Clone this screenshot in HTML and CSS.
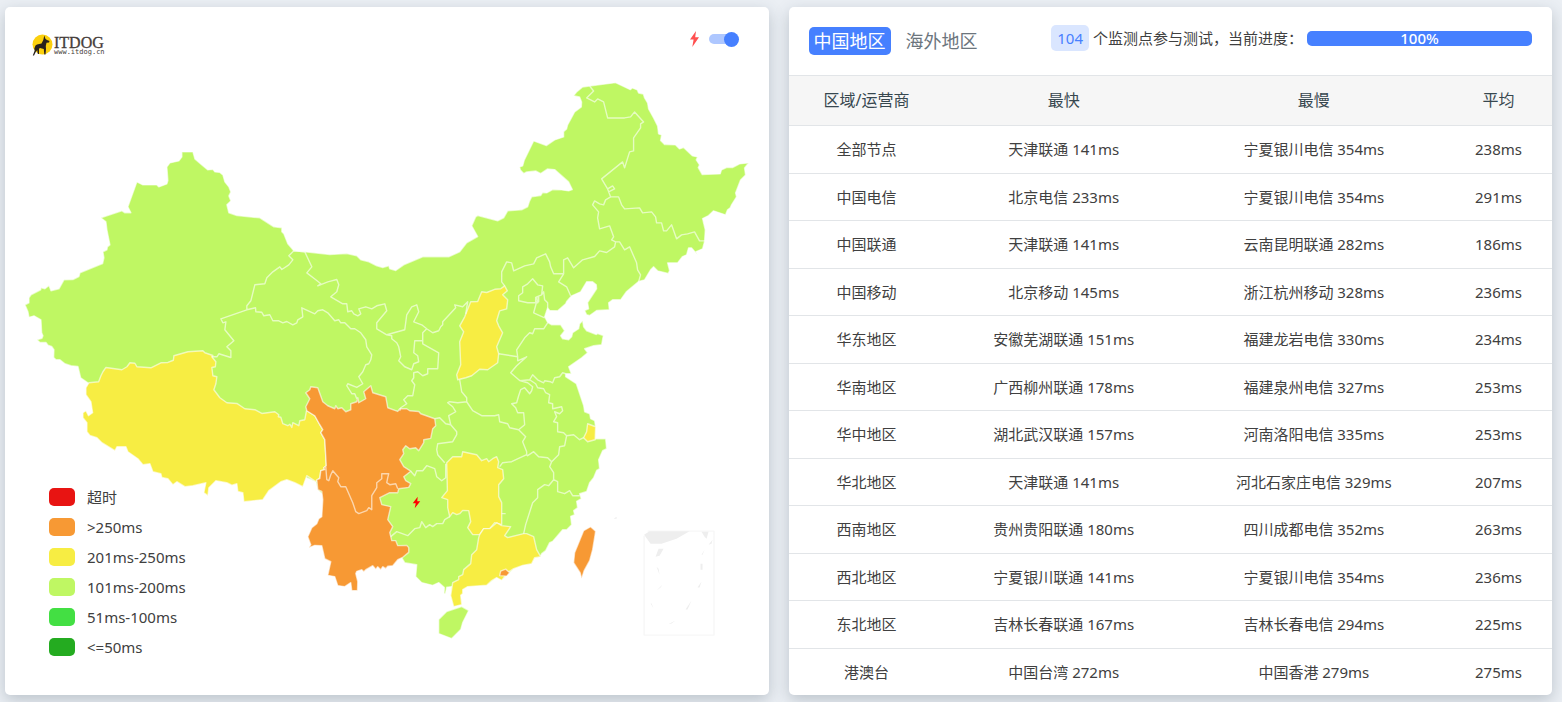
FILE: index.html
```
<!DOCTYPE html>
<html lang="zh-CN">
<head>
<meta charset="utf-8">
<title>ITDOG</title>
<meta name="viewport" content="width=device-width, initial-scale=1">
<link rel="stylesheet" href="styles.css">
</head>
<body>
<main class="page">
  <section class="card map-card">
    <svg class="map" viewBox="5 7 764 688" role="img" aria-label="中国地图">
      <!-- mainland -->
      <path class="lv-200" d="M182 152L193 152L195 159L202 165L208 170L213 169.500L215 172L220 172.500L223 175L225 182L229 187L231 192L229 196L231 201L227 205L229 213L237 215.700L260 218L274 227L282 228L282 232L284 234L288 244L294 251L305 252L330 254.700L347 253.700L357 256L361 260L369 262L377 266L383 267.700L389 266L390 269L396 270.700L404 265L423 257L449 257L460 252L467 243L478 236.700L472 226L476 217L478 215.700L498 221L504 218L508 211L522 210L528 207L530 201L532 197L541 195.700L543 192.700L547 193L553 189.700L562 190L569 191L572.700 189.700L569 182L555 169.700L548 169L541 173.700L536 171L527 172L524 173.700L520.700 170L520 167L523 166L524.700 160L534 141L546.700 145.700L555 140L564 137L564 131.700L567 129L568 125L575 112L581.700 107L582 102L580 97L574 95.700L577 92L583 87L590 86L616 82.700L630.700 89.700L632.700 88L637.700 90L639 93L643.700 94L645 98L648 103L649 109L654 118L658 126L659 134L662 135L661 140.700L665 144.700L676 145L680 149L684 147.700L693 156L698 157L696.700 160L700 165L698.700 167.700L702.700 174.700L720.700 174L722 170L727 167.700L733 167.700L740 164L749 163L745 168L746 175L741 180L736 193L737 197L732 205L730.700 208L728 210L726 215L714 211L709 215.700L703 218.700L705.700 230L705 241.700L703 249L696 252L698 255L692 248L689 248L687 255L683 256.700L678 263L668 263L670 270.700L668.700 273.700L658 271L654 267L651 270L645 280L639 281.700L627 291.700L621 300L613 300L609 303L609.700 310L597 310.700L590 315.700L587 315L585 310.700L589 309L588 302.700L597 289L596.700 285L593 282L587 282L581 292L572 296L567 301.700L566 304L558 311L550 310.700L548 308L545 317L548 322.700L552 325L561 325L565 331L561 336L563 339L569 340L572 337L573 333L579 329L580 324L583 321L584 327L587 331L596.700 334.700L598 333.700L603.700 335.700L602 345L594 346L585 349L588 353L582 358L569 367L571.700 374L566 374L566 377L576.700 384L584 405.700L585 412L590 414L591 419L595 421L596 427L595.500 439L606 439L607 449L603 451L599 460L600 469L597 470.700L594 478L590 483L587 491.700L580 494L581.700 499L577 501.700L578 508L574 511L575 515L571 516.700L572 525L567 530L563 530L557 537L553 541.700L550 543L546 551L542 554L540.700 557L535 558L532 564L523 565.700L514 569L502 580.700L497 578L487 585.700L468 587L463 590L463 594L461 595.700L462 605L454 607L451 596L452 587L447 587.700L445.700 594L444.300 594L444.700 588L439 583L433 585.700L422 583L416 577L417 565L405 563L402 558L370 540L318 490L316 482L90 384L89 383.700L80.700 378L78 366.700L71 366L65 364L60 360L56 360L53.700 357.700L54 350L51.700 346.700L48 345.500L46 342.700L40 342.700L37 340L42 338.500L43 336L41.700 333L41 320L34 316L29 317.500L28 312L25 305L29 303L29 298L31 295L40.700 290L41 288L45 289L49 285.700L51 291L59 289L64 280L73 279.700L79 276.700L80 273L102.700 263.700L104 258L103 252L107 250L107.500 247L110 245L107 230L106 222L101 218L122 211L125 213L131 213L128 207L137 182L143 185L157 185L159 187L167 184L168 180.700L167 167L170 163L179 161L182 157Z"/>
      <!-- Hainan -->
      <path class="lv-200" d="M447 612L462 607L469 611L463 623L461 630L456 635L452 639L439 634L439 620Z"/>
      <!-- Tibet -->
      <path class="lv-250" d="M89 383L98.700 382L101 376L103 372L106 367.700L122 370L127 367L130 363L135 363.500L137 367L151 368L161 363L168 362.700L173.500 360.500L174 356L188 352L203 351L205 353L213 355.700L212 357L216 362L215.500 367L212 367.700L213 376L217 377L216 384L214 390L220 398L227 403L237 403.700L245 409L255 410L262 413.700L275 412L279 415L278.500 417L281 417.500L283 424L288 426L290 424.500L292 427.700L293 423L299 426L300 421L305 420L306.700 411L315 416L320 425L323 430L321 433L325 440L326.500 466L324 468L325 470L321 471L320 478L316 482L307 476L303 487L295 483L287 480L281 482L269 491L263 500L244 502L243 493L238 491.700L237 484L232 485.500L227 483L216 481L209 488L208 496L204 493L206 483L193 486L185 487L177 482L173 485L168 479L162 477.700L161 474L153 472L150 464L143 465L138 459L128 452L126 447L117 447L115 451L102 443L97 438L90 435.700L87 432L87 423L83 418L83 413L86 411L88.500 416L92.700 413L91 402L86 395L86 388Z"/>
      <!-- Sichuan and Yunnan -->
      <path class="lv-over" d="M307 411L306 407L310 399L306 393L310 390L311 387L318 388L323 402L328 406L335 409L336 406L338 409L342 408L346 412L351 410L351 404L357 402L358 398L359 403L366 399L364 392L371 386L373 393L386 397L388 408L398 411.700L400 409L407 409L410 411L419 411.700L421 414L435 419L436 426L433 429L431 438.700L424 440L424 443L419 451L416 448L410 449L406 446L403 450L404 454L400 460L404 467L411 471.500L404 477L406 481L411 484L409 487.700L399 489L398 493L390 493L380 498L382 505L391 507L388 520L393 527L390 533L392 541L396 541L398 546L407 545.700L409 548L409 552.700L403 557.700L398 560L393 566L388 566.500L386 569L383 567L381 570L378 567L376 569.500L373 566L366 570L364 572L362 570L357 571.700L356 574L358 582L357.700 591L352 591L351 583L345 587L338 586L335 577L328 575.700L331 562L325 559L322 546L315 545.700L309 548L311 545L308 537L312 528L317 524L319 519L322 517L323 500L322 491.700L318 490L317 480L320 479L321 471L325 470L324 468L326.500 466L325 440L321 433L323 430L320 425L315 416Z"/>
      <!-- Shanxi -->
      <path class="lv-250" d="M505 286L507.700 291L503 295L508 300L507 309L500 311L497 321L499 326L503 333L497 347L499 354L498 363L488 370L480 369.500L472 376L466 378L458 380L457 375L461 365L460 342L464 332L460 326L465 317L471 302L478 301.700L482 292L487 292.700L495 289.500L501 289Z"/>
      <!-- Hunan -->
      <path class="lv-250" d="M447 463L453 457L462 457L463 452L477 455L482 461L487 459L489 462L493 459L497 457L499 462L498 468L503 470L504 479L499 485L499 497L502 503L502 525L495 523L490 529L484 529L480 535L473 535L468 528L471 522L469 511L463 510.700L460 514L457 515L453 513L450 517L448 508L448 500L442 498L447.700 491Z"/>
      <!-- Guangdong -->
      <path class="lv-250" d="M480 535L484 529L490 529L497 523L502 526L511 527L505 536L508 538L524 534L527 534L534 537L537 550L541 557L535 558L532 564L523 565.700L514 569L508 573L502 580.700L497 578L492 581L487 585.700L468 587L463 590L463 594L461 595.700L462 605L454 607L451 596L453 583L459 580L459 577L463 575L464 570L471 564L472 555L477 550L479 538Z"/>
      <!-- Shanghai, Hong Kong, Taiwan -->
      <path class="lv-250" d="M588 424L596 427L595.500 440L588 442L584 438L587 432Z"/>
      <path class="lv-over" d="M500 576L501 571.500L506 569.500L510 573L507 576.500ZM584 531L591 527L596 531.500L595 538L593 550L590 561L584.500 571L582 579L580.500 573L574 563L575 553Z"/>
      <!-- province borders -->
      <path class="border" d="M294 251L289 256L293 260L289 265L282 269.700L280 267L273 272L267 278L265 284L255 285L251 301L247 306L247 310L221 319L223 323L226 322L225 330L234 341L227 347L231 351L231 357.700L219 354L217 357L212 357
      M247 310L255.700 308L256 312L262 312.500L264 316L270 315L273 321L279 321L283 323L287 321.700L293 325L297 323L298 320L303 317L302 308L315 314L318 311L323 310L328 313L335 321L339 320L341 323L345 323L351 329L355 329L361 333L366 340L367 347L372 355L371 360L369 364L366 365L363 372L359 377L363 384L357 387.700L348 384L347 386L352 394L355 394L357 399
      M294 251L305 252L312 267L307 273L316 280L321 284L318 286L328 282L337 279.700L339 285L337 292L331 297L343 304L347 304L348 312L352 311L354 314L358 316L361 314L359 309L366 307L372 309L377 306L385 304L387 311L377 323L377 329L387 335L405 330L407 315L412 307L417 305L419 312L414 322L422 325L427 329L433 333L439 331L441 327L443 325L443 322L456 308L455 305L463 307L468 302L466 314
      M387 335L392 336L392 339L397 343L399 347L401 357L399 361L405 367L412 370L414 364L419 362L418 356L414 353L415 341L423 341L423 333L427 329
      M423 341L423 344L439 353L438 369L428 369L428 374L423 376L418 372L414 373L414 378L412 381L415 385L413 396L408 396L404 400L407 404L401 408L400 411
      M435 419L440 418L446 424L451 425L449 416L456 412L453 407L448 403L450 402L458 403L467 402L467 398L462 392L460 380
      M467 402L473 411L482 416L495 416L499 415L500 422L508 424L510 428L519 430L525 425L524 413L518 413L516 408L512 404L517 403L519 396L521 390L525 388L530 394L532 391L533 387L528 383L520 380.700L511 373L517 366L527 357L518 361L518 357L499 354
      M518 357L517 350L525 338L530 333L533 334L535 329L544 329L548 323
      M520 381L530 380L533 375L538 380L544 383L545 381L551 382L553 383L555 378L560 377L563 373L566 374
      M530 380L536 384L538 388L544 389L546 393L550 395L549 403L553 404L553 409L562 407L563 411L560 414L555 412L557 417L554 422L558 423L558 432L564 433L567 436L574 435L580 440L584 438
      M567 436L565 446L560 447L559 455L552 462L548 458L539 457L534 452L528 456L527 455L512 462L503 463L500 467
      M519 430L526 437L523 442L527 452L527 455
      M451 425L457 432L457 435L453 442L438 444L437 450L438 455L445 463
      M411 471.500L415 476L417 471L423 471L427 466L435 469L437 477L442 481L446 478L446 464
      M391 537L397 532L408 536L415 529L420 528L422 522L426 528L430 525L433 527L437 524L443 524L445 520L450 517
      M502 514L506 514M524 534L526 525L533 503L538 498L538 490L545 485L549 486L554 480L558 482L558 492L565 494L570 491L573 496L580 496
      M552 462L550 467L554 473L554 480
      M505 286L502 282L502 272L507 262L512 263L514 271L525 266L534 264L537 258L546 254L550 262L551 267L554 274L564 274L559 282L567 287L571 296
      M564 274L564 260L568 258L574 268L583 260L595 256.700L600 251L607 252.700L615 247L616 242L620 242L625 250L630 247L637 263L638 270L641 275L639 282
      M616 242L612 240L614 237L610 226L600 229L598 218L599 212L593 205L595 201L600 204L604 205L606 200L611 197L608 189L602 179L623 162L625 168L630 152L634 151L634 138L641 128L641 124L644 122L635 112L631 117L625 118L608 118L604 102L598 99L595 102L587 98L594 91L590 86
      M608 189L613 186L615 189L609 192M611 197L619 197L622 205L625 209L640 208L643 213L652 212L656 217L657 223L662 223L664 231L667 231L672 225L677 239L682 235L688 234L695 232L700 241L706 241
      M533 279L538 285L543 286L542 295L537 297L538 303L533 303L528 303L519 301L519 296L523 293L523 287L528 284ZM542 295L544 292L545 300L548 303L548 308M537 302L534 313L545 318M536 297L536 302L539 302L539 297
      M326 467L327 480L329 481L331 475L333 471L339 478L338 482L341 487L346 487L353 503L356 512L359 514L367 511L369 508L372 510L372 496L377 488L377 483L382 479L382 474L389 474L388 478L387 483L390 485L396 484L398 489"/>
      <!-- South China Sea inset -->
      <path class="sea-frame" d="M648 531.500H714.500V635.500H644.500V536"/>
      <path class="sea" d="M644.500 535L650 531.500H690L677 539L662 544H651ZM702 532H709L707 539L705 537ZM659 549H664L660 556L656 557ZM713 540L709 545L712 544ZM705 550L702 555L703 555ZM701 564H703V570H701ZM702 582L698 588L700 588ZM692 601L686 610L688 610ZM676 621L669 624.500L672 624ZM651 604H652L654 609ZM657 567L660 575L659 569ZM663 585L657 591L661 588ZM617 517L614 519H617Z"/>
      <path class="pin" d="M418 497L413 503.500H416L415 508.500L420.500 501.500H417.500Z"/>
    </svg>

    <header class="map-head">
      <a class="logo" href="#" aria-label="ITDOG">
        <svg class="logo-mark" viewBox="0 0 22 22" aria-hidden="true">
          <circle cx="10.500" cy="10.500" r="10" fill="#fbd00d"/>
          <path d="M12.300 1.500L13.500 5L15 6L17.500 7L17 8.500L14.500 8.800L13.800 12L14 15L13.500 20.500H12.300L11.800 15L8 14L5.500 16L4 17.500L2 21.500H.8L2.700 16.500L2.300 14.500L3.500 11.500L5 10.500L9.500 9.500L11.300 6Z" fill="#27201c"/>
          <path d="M5 14L5.800 20H7L7 14Z" fill="#27201c"/>
        </svg>
        <span class="logo-words">
          <span class="logo-name">ITDOG</span>
          <span class="logo-url">www.itdog.cn</span>
        </span>
      </a>
      <label class="switch">
        <svg class="bolt" viewBox="0 0 9 16" aria-hidden="true">
          <path d="M6 0L0 8.500H3.600L2.300 16L9 6.300H5.200Z"/>
        </svg>
        <input class="switch-input" type="checkbox" checked aria-label="闪电标记">
      </label>
    </header>

    <ul class="legend">
      <li class="legend-item"><span class="swatch timeout"></span>超时</li>
      <li class="legend-item"><span class="swatch over-250"></span>&gt;250ms</li>
      <li class="legend-item"><span class="swatch up-250"></span>201ms-250ms</li>
      <li class="legend-item"><span class="swatch up-200"></span>101ms-200ms</li>
      <li class="legend-item"><span class="swatch up-100"></span>51ms-100ms</li>
      <li class="legend-item"><span class="swatch up-50"></span>&lt;=50ms</li>
    </ul>
  </section>

  <section class="card">
    <header class="stats-head">
      <nav class="tabs">
        <button class="tab active" type="button">中国地区</button>
        <button class="tab" type="button">海外地区</button>
      </nav>
      <div class="status">
        <span class="count">104</span>
        <span class="status-text">个监测点参与测试，当前进度：</span>
        <div class="progress" role="progressbar" aria-label="当前进度" aria-valuenow="100"><div class="progress-bar">100%</div></div>
      </div>
    </header>
    <table class="stats">
      <colgroup><col class="col-area"><col class="col-fast"><col class="col-slow"><col class="col-avg"></colgroup>
      <thead><tr><th>区域/运营商</th><th>最快</th><th>最慢</th><th>平均</th></tr></thead>
      <tbody>
        <tr><td>全部节点</td><td>天津联通 141ms</td><td>宁夏银川电信 354ms</td><td>238ms</td></tr>
        <tr><td>中国电信</td><td>北京电信 233ms</td><td>宁夏银川电信 354ms</td><td>291ms</td></tr>
        <tr><td>中国联通</td><td>天津联通 141ms</td><td>云南昆明联通 282ms</td><td>186ms</td></tr>
        <tr><td>中国移动</td><td>北京移动 145ms</td><td>浙江杭州移动 328ms</td><td>236ms</td></tr>
        <tr><td>华东地区</td><td>安徽芜湖联通 151ms</td><td>福建龙岩电信 330ms</td><td>234ms</td></tr>
        <tr><td>华南地区</td><td>广西柳州联通 178ms</td><td>福建泉州电信 327ms</td><td>253ms</td></tr>
        <tr><td>华中地区</td><td>湖北武汉联通 157ms</td><td>河南洛阳电信 335ms</td><td>253ms</td></tr>
        <tr><td>华北地区</td><td>天津联通 141ms</td><td>河北石家庄电信 329ms</td><td>207ms</td></tr>
        <tr><td>西南地区</td><td>贵州贵阳联通 180ms</td><td>四川成都电信 352ms</td><td>263ms</td></tr>
        <tr><td>西北地区</td><td>宁夏银川联通 141ms</td><td>宁夏银川电信 354ms</td><td>236ms</td></tr>
        <tr><td>东北地区</td><td>吉林长春联通 167ms</td><td>吉林长春电信 294ms</td><td>225ms</td></tr>
        <tr><td>港澳台</td><td>中国台湾 272ms</td><td>中国香港 279ms</td><td>275ms</td></tr>
      </tbody>
    </table>
  </section>
</main>
</body>
</html>
```
FILE: styles.css
```
* {
  box-sizing: border-box;
}

body {
  margin: 0;
  background: #ebeff4;
  color: #404040;
  font: 15px/1.5 "Noto Sans", "Noto Sans CJK SC", sans-serif;
}

.page {
  display: grid;
  grid-template-columns: minmax(0, 1fr) minmax(0, 1fr);
  gap: 20px;
  padding: 7px 10px 7px 5px;
}

.card {
  overflow: hidden;
  border-radius: 5px;
  background: #fff;
  box-shadow: 0 5px 15px rgba(50, 70, 85, 0.26);
}

/* Map card: toolbar and legend share the map's grid cell */
.map-card {
  display: grid;
}

.map,
.map-head,
.legend {
  grid-area: 1 / 1;
}

.map {
  display: block;
  width: 100%;
}

.map path {
  stroke: rgba(255, 255, 255, 0.6);
  stroke-width: 1.4px;
  stroke-linejoin: round;
}

.map .lv-200 {
  fill: #bff763;
}

.map .lv-250 {
  fill: #f7ed43;
}

.map .lv-over {
  fill: #f79934;
}

.map .border {
  fill: none;
}

.map .sea-frame {
  fill: none;
  stroke: #f7f7f7;
}

.map .sea {
  fill: #eee;
  stroke: none;
}

.map .pin {
  fill: #f00;
  stroke: none;
}

.map-head {
  display: flex;
  align-items: flex-start;
  justify-content: space-between;
  align-self: start;
  padding: 24px 29px 0 27px;
}

.logo {
  display: flex;
  padding-top: 3px;
  color: #463d3a;
  text-decoration: none;
}

.logo-mark {
  width: 22px;
  height: 22px;
}

.logo-words {
  display: flex;
  flex-direction: column;
  padding-top: 2px;
}

.logo-name {
  font: 16px/14px "Liberation Serif", serif;
  -webkit-text-stroke: 0.3px currentColor;
}

.logo-url {
  font: 7px/4px "DejaVu Sans Mono", monospace;
}

.switch {
  display: flex;
  align-items: center;
  gap: 10px;
}

.bolt {
  width: 9px;
  height: 16px;
  fill: #ff5050;
}

.switch-input {
  appearance: none;
  display: flex;
  align-items: center;
  width: 26px;
  height: 10px;
  margin: 0 5px 0 0;
  border-radius: 5px;
  background: #aec7ff;
}

.switch-input::before {
  content: "";
  flex: none;
  width: 15px;
  height: 15px;
  border-radius: 50%;
  background: #4680ff;
}

.switch-input:checked::before {
  margin-left: 15px;
}

.legend {
  align-self: end;
  justify-self: start;
  margin: 0;
  padding: 0 0 33px 44px;
  list-style: none;
}

.legend-item {
  display: flex;
  align-items: center;
  gap: 12px;
  height: 30px;
}

.swatch {
  width: 26px;
  height: 18px;
  border-radius: 5px;
}

.timeout {
  background: #e81412;
}

.over-250 {
  background: #f79934;
}

.up-250 {
  background: #f7ed43;
}

.up-200 {
  background: #bff763;
}

.up-100 {
  background: #43df43;
}

.up-50 {
  background: #24ab20;
}

/* Statistics card */
.stats-head {
  display: flex;
  align-items: flex-start;
  justify-content: space-between;
  height: 68px;
  padding: 18px 20px 0;
}

.tabs {
  display: flex;
  gap: 10px;
  padding-top: 2px;
}

.tab {
  padding: 0 5px;
  border: 0;
  border-radius: 5px;
  background: none;
  color: #6c757d;
  font: inherit;
  font-size: 18px;
  line-height: 28px;
  white-space: nowrap;
}

.tab.active {
  background: #4680ff;
  color: #fff;
}

.status {
  display: flex;
  align-items: center;
  white-space: nowrap;
}

.count {
  margin-right: 4px;
  padding: 0 6px;
  border-radius: 5px;
  background: #dae6ff;
  color: #4680ff;
  line-height: 26px;
}

.status-text {
  margin-right: 4px;
}

.progress {
  width: 225px;
  border-radius: 5px;
  background: #e9ecef;
}

.progress-bar {
  border-radius: 5px;
  background: #4680ff;
  color: #fff;
  font-weight: 500;
  line-height: 15px;
  text-align: center;
}

.stats {
  width: 100%;
  table-layout: fixed;
  border-spacing: 0;
  text-align: center;
}

.col-area {
  width: 156px;
}

.col-fast {
  width: 238px;
}

.col-slow {
  width: 262px;
}

.col-avg {
  width: 107px;
}

.stats th {
  padding: 12px 0 13px;
  border-top: 1px solid #e2e5e8;
  border-bottom: 1px solid #e2e5e8;
  background: #f6f6f6;
  color: #37474f;
  font-size: 16px;
  font-weight: 400;
}

.stats td {
  padding: 12px 0;
  border-bottom: 1px solid #e2e5e8;
}

.stats tbody tr:last-child td {
  border-bottom: 0;
}
```
